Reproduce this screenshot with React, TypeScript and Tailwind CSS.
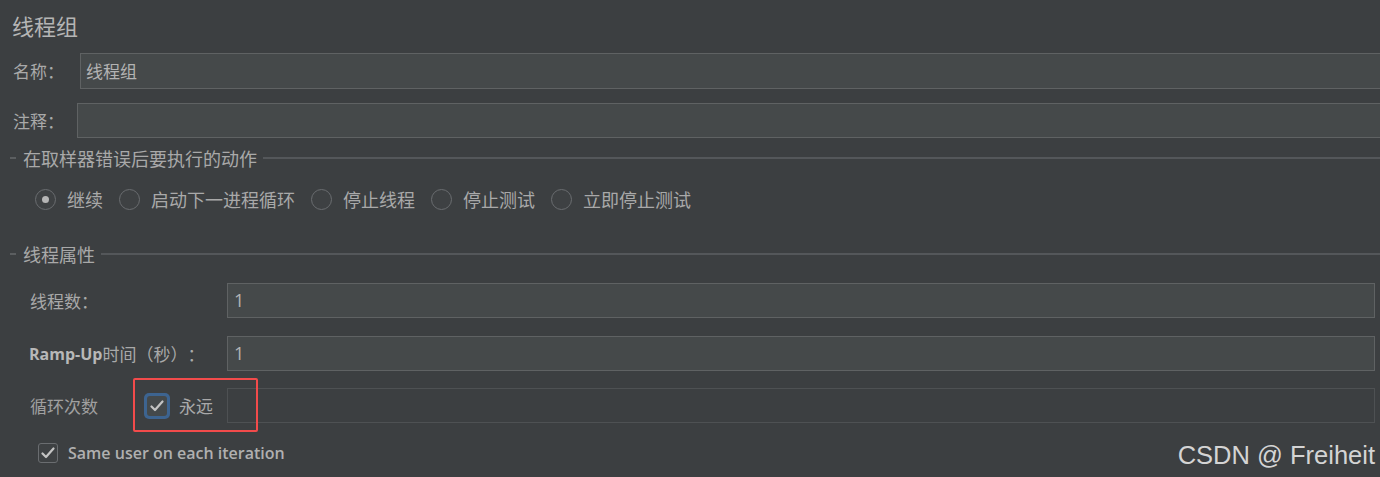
import React from 'react';

const cjk = { fontFamily: '"Noto Sans CJK SC", "Noto Sans", sans-serif' };

const SectionTitle: React.FC<{ text: string }> = ({ text }) => (
  <div className="flex items-center h-[20px]">
    <div className="ml-[10px] w-[6px] h-[2px] bg-[#5b5e60]" />
    <span className="ml-[7px] text-[18px] leading-none text-[#a9a9a9]">{text}</span>
    <div className="ml-[6px] flex-1 h-[2px] bg-[#54575a]" />
  </div>
);

const Radio: React.FC<{ label: string; checked?: boolean }> = ({ label, checked }) => (
  <div className="flex items-center">
    <div className="w-[21px] h-[21px] rounded-full border border-[#6a6d70] bg-[#3e4143] flex items-center justify-center">
      {checked && <div className="w-[7px] h-[7px] rounded-full bg-[#b5b5b5]" />}
    </div>
    <span className="ml-[11px] text-[18px] leading-none text-[#a9a9a9]">{label}</span>
  </div>
);

const Check: React.FC = () => (
  <svg width="14" height="12" viewBox="0 0 14 12">
    <path d="M1.5 6.5 L5 10 L12.5 1.5" fill="none" stroke="#c4c4c4" strokeWidth="2.2" strokeLinecap="round" strokeLinejoin="round" />
  </svg>
);

const App: React.FC = () => {
  return (
    <div className="relative w-[1380px] h-[477px] overflow-hidden bg-[#3c3f41] text-[#b3b3b3] [text-spacing-trim:space-all]" style={cjk}>
      <div className="pt-[13px] pl-[12px] text-[22px] leading-[24px] text-[#b5b5b5]">线程组</div>

      <div className="mt-[16px] flex items-center h-[36px]">
        <span className="ml-[13px] w-[67px] text-[17px] text-[#a9a9a9]">名称：</span>
        <div className="flex-1 h-full border border-r-0 border-[#5f6263] bg-[#45494a] flex items-center pl-[5px] text-[17px] text-[#b3b3b3]">
          线程组
        </div>
      </div>

      <div className="mt-[14px] flex items-center h-[35px]">
        <span className="ml-[13px] w-[64px] text-[17px] text-[#a9a9a9]">注释：</span>
        <div className="flex-1 h-full border border-r-0 border-[#5f6263] bg-[#45494a]" />
      </div>

      <div className="mt-[10px]">
        <SectionTitle text="在取样器错误后要执行的动作" />
      </div>

      <div className="mt-[20px] h-[22px] flex items-center pl-[35px] gap-[16px]">
        <Radio label="继续" checked />
        <div className="flex items-center gap-[16px]">
          <Radio label="启动下一进程循环" />
          <Radio label="停止线程" />
          <Radio label="停止测试" />
          <Radio label="立即停止测试" />
        </div>
      </div>

      <div className="mt-[34px]">
        <SectionTitle text="线程属性" />
      </div>

      <div className="mt-[19px] flex items-center h-[35px] pr-[5px]">
        <span className="ml-[30px] w-[197px] text-[17px] text-[#a9a9a9]">线程数：</span>
        <div className="flex-1 h-full border border-[#5f6263] bg-[#45494a] flex items-center pl-[6px] text-[18px] text-[#b3b3b3]" style={{ fontFamily: '"Open Sans", sans-serif' }}>
          1
        </div>
      </div>

      <div className="mt-[18px] flex items-center h-[35px] pr-[5px]">
        <span className="ml-[29px] w-[198px] text-[17px] text-[#a9a9a9] flex items-center">
          <span className="font-bold text-[#b8b8b8]" style={{ fontFamily: '"Open Sans", sans-serif', fontSize: '16px' }}>Ramp-Up</span>
          <span>时间（秒）：</span>
        </span>
        <div className="flex-1 h-full border border-[#5f6263] bg-[#45494a] flex items-center pl-[6px] text-[18px] text-[#b3b3b3]" style={{ fontFamily: '"Open Sans", sans-serif' }}>
          1
        </div>
      </div>

      <div className="mt-[17px] flex items-center h-[35px] pr-[5px]">
        <span className="ml-[30px] w-[114px] text-[17px] text-[#a0a0a0]">循环次数</span>
        <div className="w-[26px] h-[26px] rounded-[5px] bg-[#3d6490] flex items-center justify-center">
          <div className="w-[20px] h-[20px] rounded-[3px] bg-[#44494b] flex items-center justify-center">
            <Check />
          </div>
        </div>
        <span className="ml-[9px] w-[48px] text-[17px] text-[#a9a9a9]">永远</span>
        <div className="flex-1 h-full border border-[#4e5153] bg-[#3c3f41]" />
      </div>

      <div className="mt-[20px] flex items-center h-[20px] pl-[38px]">
        <div className="w-[20px] h-[20px] rounded-[3px] border border-[#6a6d70] bg-[#3e4143] flex items-center justify-center">
          <Check />
        </div>
        <span className="ml-[10px] text-[16px] font-semibold text-[#b0b0b0]" style={{ fontFamily: '"Open Sans", sans-serif' }}>
          Same user on each iteration
        </span>
      </div>

      <div className="absolute left-[133px] top-[378px] w-[125px] h-[54px] border-2 border-[#f24b4b] rounded-[2px]" />

      <div className="absolute right-[5px] top-[436px] text-[25.5px] text-[#d4d4d4]" style={{ fontFamily: '"Liberation Sans", Arial, sans-serif' }}>
        CSDN @ Freiheit
      </div>
    </div>
  );
};

export default App;
